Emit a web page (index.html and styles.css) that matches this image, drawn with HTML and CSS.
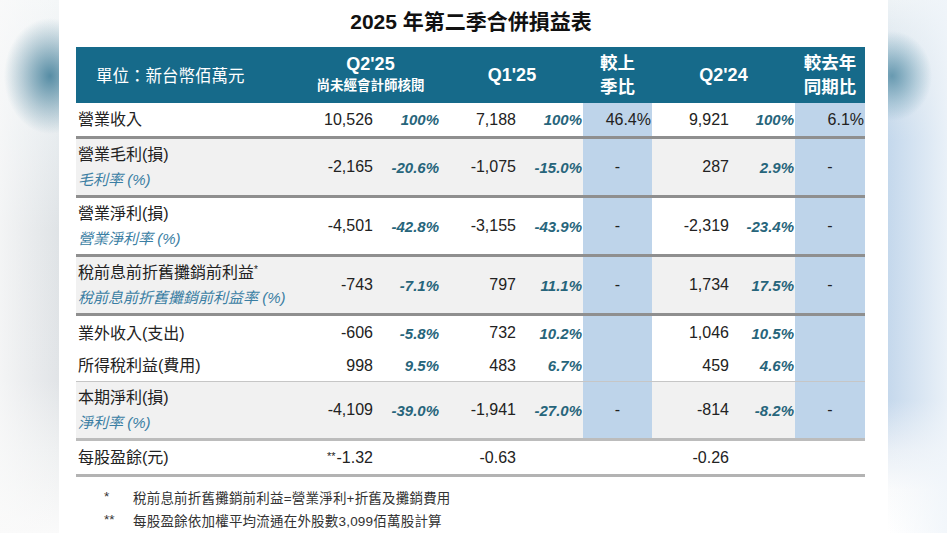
FILE: index.html
```html
<!DOCTYPE html>
<html lang="zh-Hant">
<head>
<meta charset="utf-8">
<title>2025 年第二季合併損益表</title>
<link rel="stylesheet" href="styles.css">
</head>
<body>
<div class="page">
  <div class="side side-left"></div>
  <main class="panel">
    <h1 class="title">2025 年第二季合併損益表</h1>
    <div class="table">
      <div class="row head">
        <div class="h-label">單位：新台幣佰萬元</div>
        <div class="h-col span2"><span class="h-big">Q2'25</span><span class="h-small">尚未經會計師核閱</span></div>
        <div class="h-col span2"><span class="h-big">Q1'25</span></div>
        <div class="h-col"><span class="h-cjk">較上<br>季比</span></div>
        <div class="h-col span2"><span class="h-big">Q2'24</span></div>
        <div class="h-col"><span class="h-cjk">較去年<br>同期比</span></div>
      </div>

      <div class="row data short line-dark">
        <div class="lbl"><span class="main">營業收入</span></div>
        <div>10,526</div><div class="p">100%</div>
        <div>7,188</div><div class="p">100%</div>
        <div class="cmp num">46.4%</div>
        <div>9,921</div><div class="p">100%</div>
        <div class="cmp num">6.1%</div>
      </div>

      <div class="row data tall gray line-dark">
        <div class="lbl"><span class="main">營業毛利(損)</span><span class="sub">毛利率 (%)</span></div>
        <div>-2,165</div><div class="p">-20.6%</div>
        <div>-1,075</div><div class="p">-15.0%</div>
        <div class="cmp">-</div>
        <div>287</div><div class="p">2.9%</div>
        <div class="cmp">-</div>
      </div>

      <div class="row data tall line-dark">
        <div class="lbl"><span class="main">營業淨利(損)</span><span class="sub">營業淨利率 (%)</span></div>
        <div>-4,501</div><div class="p">-42.8%</div>
        <div>-3,155</div><div class="p">-43.9%</div>
        <div class="cmp">-</div>
        <div>-2,319</div><div class="p">-23.4%</div>
        <div class="cmp">-</div>
      </div>

      <div class="row data tall gray line-dark">
        <div class="lbl"><span class="main">稅前息前折舊攤銷前利益<sup>*</sup></span><span class="sub">稅前息前折舊攤銷前利益率 (%)</span></div>
        <div>-743</div><div class="p">-7.1%</div>
        <div>797</div><div class="p">11.1%</div>
        <div class="cmp">-</div>
        <div>1,734</div><div class="p">17.5%</div>
        <div class="cmp">-</div>
      </div>

      <div class="row data mid">
        <div class="lbl"><span class="main">業外收入(支出)</span></div>
        <div>-606</div><div class="p">-5.8%</div>
        <div>732</div><div class="p">10.2%</div>
        <div class="cmp"></div>
        <div>1,046</div><div class="p">10.5%</div>
        <div class="cmp"></div>
      </div>

      <div class="row data mid2 line-thin">
        <div class="lbl"><span class="main">所得稅利益(費用)</span></div>
        <div>998</div><div class="p">9.5%</div>
        <div>483</div><div class="p">6.7%</div>
        <div class="cmp"></div>
        <div>459</div><div class="p">4.6%</div>
        <div class="cmp"></div>
      </div>

      <div class="row data tall gray line-light">
        <div class="lbl"><span class="main">本期淨利(損)</span><span class="sub">淨利率 (%)</span></div>
        <div>-4,109</div><div class="p">-39.0%</div>
        <div>-1,941</div><div class="p">-27.0%</div>
        <div class="cmp">-</div>
        <div>-814</div><div class="p">-8.2%</div>
        <div class="cmp">-</div>
      </div>

      <div class="row data short plain line-bottom">
        <div class="lbl"><span class="main">每股盈餘(元)</span></div>
        <div><span class="stars">**</span>-1.32</div><div class="p"></div>
        <div>-0.63</div><div class="p"></div>
        <div class="cmp"></div>
        <div>-0.26</div><div class="p"></div>
        <div class="cmp"></div>
      </div>
    </div>

    <div class="notes">
      <div class="note"><span class="mark">*</span><span class="note-text">稅前息前折舊攤銷前利益=營業淨利+折舊及攤銷費用</span></div>
      <div class="note"><span class="mark">**</span><span class="note-text">每股盈餘依加權平均流通在外股數3,099佰萬股計算</span></div>
    </div>
  </main>
  <div class="side side-right"></div>
</div>
</body>
</html>
```

FILE: styles.css
```css
* { box-sizing: border-box; }

html, body {
  margin: 0;
  padding: 0;
}

body {
  width: 947px;
  height: 533px;
  overflow: hidden;
  font-family: "Liberation Sans", "Noto Sans CJK TC", Arial, sans-serif;
  color: #222;
  background: #ffffff;
}

.page {
  display: flex;
  width: 947px;
  height: 533px;
}

.side {
  width: 59px;
  height: 533px;
  flex: none;
}

.side-left {
  background:
    radial-gradient(ellipse 46px 58px at 50px 76px, rgba(70, 130, 156, 0.9), rgba(95, 145, 168, 0.4) 60%, rgba(110, 150, 170, 0) 100%),
    linear-gradient(to right, rgba(250, 250, 250, 0.75) 0, rgba(250, 250, 250, 0) 100%),
    linear-gradient(to bottom, #f4f7f8 0, #e9eef1 110px, #dfe3e6 230px, #e1e4e7 380px, #eef0f1 450px, #fafafa 533px);
}

.side-right {
  background:
    radial-gradient(ellipse 40px 45px at 4px 76px, rgba(92, 146, 170, 0.9), rgba(110, 160, 182, 0.4) 60%, rgba(150, 180, 200, 0) 100%),
    linear-gradient(to right, rgba(240, 245, 250, 0) 0, rgba(240, 245, 250, 0.85) 100%),
    linear-gradient(to bottom, #eef3f6 0, #d6e2ec 70px, #c4d8ec 140px, #c5d8ec 400px, #e9eff6 450px, #fafbfc 490px, #ffffff 533px);
}

.panel {
  width: 829px;
  flex: none;
  background: #ffffff;
  padding-left: 17px;
}

.title {
  margin: 0;
  height: 47px;
  padding-top: 8px;
  line-height: 28px;
  font-size: 21px;
  font-weight: bold;
  color: #111;
  text-align: center;
  padding-right: 22px;
}

.table {
  width: 789px;
}

.row {
  display: grid;
  grid-template-columns: 224px 78px 63px 78px 64px 69px 80px 63px 70px;
}

.head {
  height: 56px;
  background: #166a8a;
  color: #ffffff;
}

.h-label {
  display: flex;
  align-items: center;
  padding-left: 20px;
  font-size: 16.5px;
}

.h-col {
  display: flex;
  flex-direction: column;
  align-items: center;
  justify-content: center;
  font-weight: bold;
}

.span2 { grid-column: span 2; }

.h-big {
  font-size: 18px;
  line-height: 22px;
}

.h-small {
  font-size: 13.5px;
  line-height: 22px;
}

.h-cjk {
  font-size: 17.5px;
  line-height: 24px;
  text-align: center;
}

/* data rows */
.data > div {
  display: flex;
  align-items: center;
  justify-content: flex-end;
  font-size: 16px;
  color: #222;
}

.data > .lbl {
  flex-direction: column;
  align-items: flex-start;
  justify-content: center;
  padding-left: 2px;
}

.main {
  font-size: 16px;
  line-height: 25px;
  color: #222;
}

.main sup {
  font-size: 10px;
  vertical-align: 5px;
  line-height: 0;
}

.stars {
  font-size: 11px;
  align-self: flex-start;
  margin-top: 9px;
  margin-right: 1px;
}

.sub {
  font-size: 15px;
  line-height: 25px;
  font-style: italic;
  color: #3a7ea3;
}

.data > :nth-child(2) { padding-right: 5px; }
.data > :nth-child(3) { padding-right: 2px; }
.data > :nth-child(4) { padding-right: 3px; }
.data > :nth-child(5) { padding-right: 1px; }
.data > :nth-child(7) { padding-right: 3px; }
.data > :nth-child(8) { padding-right: 1px; }

.data > .p {
  font-size: 15px;
  font-weight: bold;
  font-style: italic;
  color: #27657b;
}

.data > .cmp {
  justify-content: center;
  background: #bed4ea;
}

.data > .cmp.num {
  justify-content: flex-end;
  padding-right: 1px;
}

.plain > .cmp {
  background: transparent;
}

.gray { background: #f1f1f1; }

.short { height: 36px; }
.tall { height: 59px; }
.mid { height: 34px; }
.mid2 { height: 32px; }

.line-dark { border-bottom: 3px solid #8f8f8f; }
.line-thin { border-bottom: 1px solid #c6c6c6; }
.line-light { border-bottom: 3px solid #bcbcbc; }
.line-bottom { border-bottom: 3px solid #b3b3b3; }

/* notes */
.notes {
  padding-top: 8px;
  padding-left: 28px;
}

.note {
  display: flex;
  height: 23px;
  align-items: center;
  font-size: 13.5px;
  color: #333;
}

.mark {
  width: 29px;
  flex: none;
}

.note-text {
  letter-spacing: 0.2px;
}
```
